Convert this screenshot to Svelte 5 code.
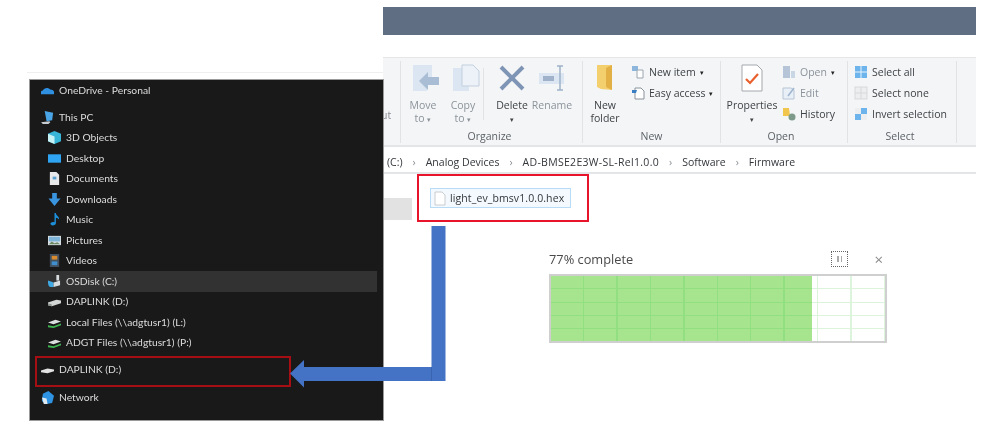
<script>
	const navRows = [
		{ label: 'OneDrive - Personal', icon: 'cloud', top: true },
		{ label: 'This PC', icon: 'pc', top: true, gap: true },
		{ label: '3D Objects', icon: 'cube' },
		{ label: 'Desktop', icon: 'desktop' },
		{ label: 'Documents', icon: 'doc' },
		{ label: 'Downloads', icon: 'down' },
		{ label: 'Music', icon: 'music' },
		{ label: 'Pictures', icon: 'pic' },
		{ label: 'Videos', icon: 'video' },
		{ label: 'OSDisk (C:)', icon: 'osdisk', active: true },
		{ label: 'DAPLINK (D:)', icon: 'drive' },
		{ label: 'Local Files (\\\\adgtusr1) (L:)', icon: 'net' },
		{ label: 'ADGT Files (\\\\adgtusr1) (P:)', icon: 'net' },
		{ label: 'DAPLINK (D:)', icon: 'usb', top: true, gap: true },
		{ label: 'Network', icon: 'globe', top: true, gap: true, last: true }
	];

	const crumbs = ['Analog Devices', 'AD-BMSE2E3W-SL-Rel1.0.0', 'Software', 'Firmware'];
	const fillPct = 78;
</script>

{#snippet navIcon(kind)}
	<svg class="nav-icon" viewBox="0 0 14 14" aria-hidden="true">
		{#if kind === 'cloud'}
			<path d="M0 11c-1-2 0-4 2-4 1-3 6-4 8-1 3 0 5 2 4 5z" fill="#2f8fe0" />
		{:else if kind === 'pc'}
			<path d="M4 0l9 2-1 8-6 1z" fill="#4aa5e6" />
			<path d="M0 12l9-1 1 1-2 2H2z" fill="#c9ced2" />
		{:else if kind === 'cube'}
			<path d="M7 0l7 3v8l-7 3-7-3V3z" fill="#38b6d8" />
			<path d="M0 3l7 3v8l-7-3z" fill="#c6f2f6" />
		{:else if kind === 'desktop'}
			<rect x="0" y="2.500" width="14" height="9" fill="#2fa4f2" />
		{:else if kind === 'doc'}
			<path d="M2 0h7l3 3v11H2z" fill="#e6e8ea" />
			<path d="M5 5h4v3H5z" fill="#5aa0d0" />
		{:else if kind === 'down'}
			<path d="M4.500 0h5v6h4L7 14 .5 6h4z" fill="#3a95e0" />
		{:else if kind === 'music'}
			<path d="M7 0h1.500c0 3 3.500 3 3.500 7-1-1-2-2-3.500-2v6c0 2-4 3.500-5.500 1.500s2-3.500 4-2.500z" fill="#1c8fd8" />
		{:else if kind === 'pic'}
			<rect x="0" y="2" width="14" height="10" fill="#d5dde2" />
			<path d="M1 3h12v5H1z" fill="#7db4d8" />
			<path d="M1 11l3-3 3 2 3-1 3 2z" fill="#6d8a62" />
		{:else if kind === 'video'}
			<rect x="2" y="0" width="10" height="14" fill="#41505f" />
			<rect x="4" y="2" width="6" height="4" fill="#d98a2e" />
			<rect x="4" y="8" width="6" height="4" fill="#3f8fd0" />
		{:else if kind === 'osdisk'}
			<path d="M0 6l6 2v5H3c-3 0-3-4-3-7z" fill="#3fa9e4" />
			<path d="M6 8l7-2v5l-7 2z" fill="#d7dcdf" />
			<path d="M9 0h3v6H9z" fill="#d7dcdf" />
		{:else if kind === 'drive'}
			<path d="M0 8l9-3 5 1v3l-10 3-4-1z" fill="#d3d6d4" />
			<path d="M0 9l4 1v2l-4-1z" fill="#8f9490" />
		{:else if kind === 'net'}
			<path d="M0 7l8-3 6 2-8 3z" fill="#dcdfe0" />
			<path d="M0 10l6 1 8-3v2l-8 3-6-1z" fill="#3fb552" />
		{:else if kind === 'usb'}
			<path d="M0 8l7-2 7 1v2l-7 2-7-1z" fill="#e2e3e2" />
		{:else if kind === 'globe'}
			<path d="M8 0l6 5-2 8-6 1-5-3 1-8z" fill="#2f93e4" />
			<path d="M1 7l5 1 1 6H3z" fill="#dfe9f0" />
		{/if}
	</svg>
{/snippet}

<main class="stage">
	<div class="hairline"></div>

	<section class="explorer">
		<div class="titlebar"></div>
		<div class="tabstrip"></div>

		<div class="ribbon">
			<div class="group stub"><span class="cut">ut</span></div>

			<div class="group organize">
				<div class="tools">
					<div class="big dim nudge">
						<svg viewBox="0 0 28 28" width="28" height="28" aria-hidden="true">
							<path d="M1 1h19v17h-5v9H1z" fill="#dbe6f2" />
							<path d="M27 13v8H16v5L7 17l9-9v5z" fill="#a9bdd4" />
						</svg>
						<span>Move<br />to <i>▾</i></span>
					</div>
					<div class="big dim nudge">
						<svg viewBox="0 0 28 28" width="28" height="28" aria-hidden="true">
							<path d="M1 4h16v23H1z" fill="#dbe6f2" />
							<path d="M10 1h11l6 6v15H10z" fill="#edf2f8" stroke="#c2cfde" />
						</svg>
						<span>Copy<br />to <i>▾</i></span>
					</div>
					<div class="divider"></div>
					<div class="big">
						<svg viewBox="0 0 28 28" width="28" height="28" aria-hidden="true">
							<path d="M3 3l22 22M25 3L3 25" stroke="#7f95b5" stroke-width="4" fill="none" />
						</svg>
						<span>Delete<br /><i>▾</i></span>
					</div>
					<div class="big dim">
						<svg viewBox="0 0 28 28" width="28" height="28" aria-hidden="true">
							<rect x="1" y="9" width="25" height="11" fill="#dbe6f2" />
							<rect x="5" y="12" width="11" height="5" fill="#9fb2c9" />
							<path d="M19 2h6M19 26h6M22 2v24" stroke="#9fb2c9" stroke-width="1.500" fill="none" />
						</svg>
						<span>Rename</span>
					</div>
				</div>
				<div class="group-name">Organize</div>
			</div>

			<div class="group new">
				<div class="tools">
					<div class="big">
						<svg viewBox="0 0 20 28" width="20" height="28" aria-hidden="true">
							<path d="M2 1h15v25l-11-1-4-2z" fill="#f3cf6e" />
							<path d="M11 4l6-3v25l-6-3z" fill="#e2b044" />
						</svg>
						<span>New<br />folder</span>
					</div>
					<div class="small-list">
						<div class="small">
							<svg viewBox="0 0 14 14" aria-hidden="true">
								<path d="M1 1h6v5H1z" fill="#8cb6dc" />
								<path d="M6 5h6v8H6z" fill="#fff" stroke="#9aa6b2" />
							</svg>
							New item <i>▾</i>
						</div>
						<div class="small">
							<svg viewBox="0 0 14 14" aria-hidden="true">
								<path d="M4 2h6l3 3v8H4z" fill="#fff" stroke="#8a929a" />
								<path d="M1 4h5L5 7H1z" fill="#3a7fc4" />
							</svg>
							Easy access <i>▾</i>
						</div>
					</div>
				</div>
				<div class="group-name">New</div>
			</div>

			<div class="group open">
				<div class="tools">
					<div class="big props">
						<svg viewBox="0 0 24 28" width="24" height="28" aria-hidden="true">
							<path d="M2 1h15l5 5v21H2z" fill="#fff" stroke="#a3a8ad" />
							<path d="M6 15l4 4 8-9" stroke="#e9602c" stroke-width="2.200" fill="none" />
						</svg>
						<span>Properties<br /><i>▾</i></span>
					</div>
					<div class="small-list">
						<div class="small dim">
							<svg viewBox="0 0 14 14" aria-hidden="true">
								<path d="M1 1h7v12H1z" fill="#b5c4d6" />
								<path d="M9 6h4v7H9z" fill="#c9d6e4" />
							</svg>
							Open <i>▾</i>
						</div>
						<div class="small dim">
							<svg viewBox="0 0 14 14" aria-hidden="true">
								<path d="M1 2h8l3 2v9H1z" fill="#e9eff6" stroke="#b7c6d8" />
								<path d="M6 10l6-8" stroke="#9fb6d0" stroke-width="1.500" />
							</svg>
							Edit
						</div>
						<div class="small">
							<svg viewBox="0 0 14 14" aria-hidden="true">
								<path d="M1 1h6l1 8H1z" fill="#f0c64f" />
								<circle cx="10" cy="10" r="3.500" fill="#7d9a8a" />
							</svg>
							History
						</div>
					</div>
				</div>
				<div class="group-name">Open</div>
			</div>

			<div class="group select">
				<div class="small-list">
					<div class="small">
						<svg viewBox="0 0 14 14" aria-hidden="true">
							<rect x="1" y="1" width="12" height="12" fill="#6db4ec" />
							<path d="M7 1v12M1 7h12" stroke="#e8f3fc" />
						</svg>
						Select all
					</div>
					<div class="small">
						<svg viewBox="0 0 14 14" aria-hidden="true">
							<rect x="1" y="1" width="12" height="12" fill="#eceeef" stroke="#d6d9db" />
							<path d="M7 1v12M1 7h12" stroke="#d6d9db" />
						</svg>
						Select none
					</div>
					<div class="small">
						<svg viewBox="0 0 14 14" aria-hidden="true">
							<rect x="1" y="1" width="12" height="12" fill="#eceeef" />
							<rect x="1" y="7" width="6" height="6" fill="#6db4ec" />
							<rect x="7" y="1" width="6" height="6" fill="#6db4ec" />
						</svg>
						Invert selection
					</div>
				</div>
				<div class="group-name">Select</div>
			</div>
		</div>

		<nav class="pathbar">
			<span class="crumb">(C:)</span>
			{#each crumbs as crumb}
				<span class="chev">›</span>
				<span class="crumb">{crumb}</span>
			{/each}
		</nav>

		<div class="listing">
			<div class="side-stub"></div>
			<div class="file-box">
				<div class="file">
					<svg viewBox="0 0 12 15" width="12" height="15" aria-hidden="true">
						<path d="M1 1h7l3 3v10H1z" fill="#fff" stroke="#c8ccd0" />
					</svg>
					light_ev_bmsv1.0.0.hex
				</div>
			</div>
		</div>

		<div class="progress">
			<div class="progress-head">
				<span class="pct">77% complete</span>
				<span class="pause"><b></b><b></b></span>
				<span class="close">×</span>
			</div>
			<div class="track">
				<div class="fill" style={`width:${fillPct}%`}></div>
			</div>
		</div>
	</section>

	<aside class="nav">
		{#each navRows as row}
			<div class="row" class:top={row.top} class:gap={row.gap} class:last={row.last} class:active={row.active}>
				{@render navIcon(row.icon)}
				<span>{row.label}</span>
			</div>
		{/each}
	</aside>

	<div class="target-box"></div>

	<svg class="arrow" viewBox="0 0 160 165" width="160" height="165" aria-hidden="true">
		<path d="M141.500 0h14v155h-14zM14 141h141v14H14z" fill="#4472c4" />
		<path d="M14 134v27.500L0 147.500z" fill="#4472c4" />
		<path d="M141.500 141v14" stroke="#3a64b0" />
	</svg>
</main>

<style>
	:global(body) {
		margin: 0;
		background: #fff;
	}

	.stage {
		position: relative;
		width: 1000px;
		height: 446px;
		overflow: hidden;
		background: #fff;
		font-family: 'Open Sans', 'Noto Sans', sans-serif;
		filter: blur(0.5px);
	}

	.hairline {
		position: absolute;
		left: 27px;
		top: 72px;
		width: 356px;
		height: 1px;
		background: #efefef;
	}

	.explorer {
		position: absolute;
		left: 383px;
		top: 7px;
		width: 593px;
		height: 420px;
		color: #4a4f55;
	}

	.titlebar {
		height: 28px;
		background: #5f6e82;
	}

	.tabstrip {
		height: 22px;
		background: #fff;
	}

	.ribbon {
		display: flex;
		height: 87px;
		background: #f4f5f6;
		border-top: 1px solid #e6e6e6;
		border-bottom: 2px solid #e4e5e6;
		font-size: 10.5px;
	}

	.group {
		display: flex;
		flex-direction: column;
		justify-content: space-between;
		margin: 3px 0 2px;
		border-right: 1px solid #e2e3e4;
		box-sizing: border-box;
	}

	.stub {
		width: 18px;
		justify-content: flex-start;
		padding-top: 47px;
	}

	.cut {
		margin-left: -2px;
		color: #8a8f94;
	}

	.organize {
		width: 182px;
		padding-left: 2px;
	}

	.new {
		width: 138px;
		padding-left: 6px;
	}

	.open {
		width: 127px;
	}

	.select {
		width: 109px;
		padding-left: 6px;
	}

	.tools {
		display: flex;
		align-items: flex-start;
		padding-top: 3px;
	}

	.big {
		display: flex;
		flex-direction: column;
		align-items: center;
		gap: 7px;
		width: 40px;
		line-height: 12.500px;
		text-align: center;
		color: #3e4246;
	}

	.nudge svg {
		margin-left: 6px;
	}

	.big i,
	.small i {
		font-style: normal;
		font-size: 7px;
	}

	.dim,
	.dim.small {
		color: #8b939b;
	}

	.divider {
		width: 1px;
		height: 52px;
		margin: 4px 8px 0 0;
		background: #e2e3e4;
	}

	.new .big {
		width: 32px;
		margin-right: 10px;
	}

	.props {
		width: 62px;
		margin-right: -1px;
	}

	.small-list {
		display: flex;
		flex-direction: column;
		gap: 5px;
	}

	.select .small-list {
		padding-top: 3px;
	}

	.small {
		display: flex;
		align-items: center;
		gap: 4px;
		height: 16px;
		white-space: nowrap;
		color: #3e4246;
	}

	.small svg {
		width: 14px;
		height: 14px;
		flex: none;
	}

	.small i {
		color: #222;
	}

	.group-name {
		text-align: center;
		color: #5c6167;
		padding-right: 6px;
	}

	.select .group-name {
		padding-right: 10px;
	}

	.pathbar {
		display: flex;
		align-items: center;
		gap: 10px;
		height: 21px;
		margin-top: 4px;
		padding-left: 4px;
		border-bottom: 2px solid #e4e5e6;
		font-size: 10.5px;
		color: #33363a;
	}

	.crumb:nth-child(5) {
		letter-spacing: 0.3px;
	}

	.chev {
		color: #8a8f94;
	}

	.listing {
		display: flex;
		align-items: flex-start;
		height: 62px;
	}

	.side-stub {
		width: 29px;
		height: 22px;
		margin-top: 24px;
		background: #e2e2e2;
	}

	.file-box {
		box-sizing: border-box;
		width: 172px;
		height: 48px;
		margin-left: 5px;
		border: 2px solid #e8142c;
		padding: 12px 0 0 11px;
	}

	.file {
		display: flex;
		align-items: center;
		gap: 4px;
		box-sizing: border-box;
		width: 141px;
		height: 20px;
		padding-left: 3px;
		background: #f3f9fe;
		border: 1px solid #b9dcf6;
		font-size: 10.5px;
		letter-spacing: 0.1px;
		color: #33363a;
		white-space: nowrap;
	}

	.progress {
		width: 338px;
		margin: 11px 0 0 166px;
	}

	.progress-head {
		display: flex;
		align-items: center;
		height: 27px;
		padding-bottom: 3px;
		box-sizing: border-box;
		font-size: 12.800px;
		color: #4a4a4a;
	}

	.pct {
		flex: 1;
	}

	.pause {
		display: flex;
		justify-content: center;
		align-items: center;
		gap: 2px;
		box-sizing: border-box;
		width: 17px;
		height: 16px;
		margin: 0 26px 0 0;
		border: 1px dotted #666;
	}

	.pause b {
		width: 1.500px;
		height: 6px;
		background: #aaa;
	}

	.close {
		margin-right: 4px;
		font-size: 15px;
		color: #8a8a8a;
	}

	.track,
	.fill {
		background-image:
			repeating-linear-gradient(90deg, transparent 0 32px, var(--line) 32px 33.400px),
			repeating-linear-gradient(180deg, transparent 0 12.400px, var(--line) 12.400px 13.300px);
	}

	.track {
		--line: #dcf4dc;
		box-sizing: border-box;
		height: 69px;
		border: 2px solid #cfcfcf;
		background-color: #fff;
	}

	.fill {
		--line: #92df82;
		height: 100%;
		background-color: #a6e58e;
	}

	.nav {
		position: absolute;
		left: 30px;
		top: 80px;
		box-sizing: border-box;
		width: 353px;
		height: 340px;
		background: #191919;
		box-shadow: 0 0 0 1px #9a9a9a;
		color: #dcdcdc;
		font-family: Lato, 'Open Sans', sans-serif;
		font-size: 10.300px;
	}

	.row {
		display: flex;
		align-items: center;
		gap: 5px;
		height: 20.500px;
		margin-right: 6px;
		padding-left: 18px;
		white-space: nowrap;
	}

	.row span {
		margin-bottom: 1px;
	}

	.row.top {
		padding-left: 11px;
	}

	.row.gap {
		margin-top: 6.500px;
	}

	.row.last {
		margin-top: 7.500px;
	}

	.row.active {
		background: #323232;
	}

	.nav-icon {
		width: 13px;
		height: 13px;
		flex: none;
	}

	.target-box {
		position: absolute;
		left: 35px;
		top: 356px;
		box-sizing: border-box;
		width: 256px;
		height: 31px;
		border: 2px solid #a50f14;
	}

	.arrow {
		position: absolute;
		left: 290px;
		top: 226px;
	}
</style>
